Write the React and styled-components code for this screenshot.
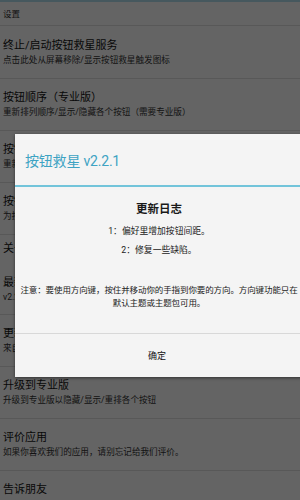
import React from "react";
import styled, { createGlobalStyle } from "styled-components";

const GlobalStyle = createGlobalStyle`
    html, body {
        margin: 0;
        padding: 0;
        background: #646464;
        overflow: hidden;
    }
    * {
        box-sizing: border-box;
    }
`;

const Screen = styled.div`
    position: relative;
    width: 300px;
    height: 500px;
    background: #646464;
    font-family: Roboto, "Noto Sans CJK SC", sans-serif;
    color: #101010;
    overflow: hidden;
    border-top: 2px solid #46585e;
`;

const SectionHeader = styled.div`
    height: ${p => p.$h}px;
    padding: ${p => p.$pt}px 3px 0;
    font-size: 8.5px;
    line-height: 12px;
    color: #111;
    border-bottom: ${p => (p.$line ? "1px solid #585858" : "none")};
`;

const Item = styled.div`
    height: ${p => p.$h || 52}px;
    padding: ${p => (p.$top ? "11px 3px 0" : "0 3px")};
    display: flex;
    flex-direction: column;
    justify-content: ${p => (p.$top ? "flex-start" : "center")};
    border-bottom: 1px solid #585858;
    white-space: nowrap;
    overflow: hidden;
`;

const Title = styled.div`
    font-size: 11px;
    line-height: 15px;
    color: #080808;
`;

const Subtitle = styled.div`
    font-size: 8.6px;
    line-height: 14px;
    color: #121212;
`;

const Dialog = styled.div`
    position: absolute;
    left: 15px;
    top: 132px;
    width: 288px;
    height: 243px;
    background: #f4f4f4;
    display: flex;
    flex-direction: column;
    box-shadow: 0 1px 3px rgba(0, 0, 0, 0.5);
`;

const DialogHead = styled.div`
    height: 53px;
    padding: 0 10px;
    display: flex;
    align-items: center;
    border-bottom: 2px solid #72c4da;
    color: #3da3c3;
    font-size: 14px;
    letter-spacing: -0.2px;
`;

const DialogBody = styled.div`
    flex: 1;
    display: flex;
    flex-direction: column;
    align-items: center;
    padding-top: 12px;
    border-bottom: 1px solid #d8d8d8;
`;

const LogTitle = styled.div`
    font-size: 11.5px;
    font-weight: bold;
    line-height: 20px;
    color: #1a1a1a;
    margin-bottom: 3px;
`;

const LogLine = styled.div`
    font-size: 8.8px;
    line-height: 19px;
    color: #222;
`;

const Note = styled.div`
    margin-top: 24px;
    width: 100%;
    text-align: center;
    font-size: 8.5px;
    line-height: 13px;
    color: #222;
    letter-spacing: -0.1px;
    white-space: nowrap;
`;

const DialogFoot = styled.div`
    height: 43px;
    display: flex;
    align-items: center;
    justify-content: center;
    font-size: 9px;
    color: #111;
    padding-right: 4px;
`;

export default function App() {
    return (
        <>
            <GlobalStyle />
            <Screen>
                <SectionHeader $h={24} $pt={6} $line>设置</SectionHeader>
                <Item $h={53}>
                    <Title>终止/启动按钮救星服务</Title>
                    <Subtitle>点击此处从屏幕移除/显示按钮救星触发图标</Subtitle>
                </Item>
                <Item>
                    <Title>按钮顺序（专业版）</Title>
                    <Subtitle>重新排列顺序/显示/隐藏各个按钮（需要专业版）</Subtitle>
                </Item>
                <Item>
                    <Title>按钮布局</Title>
                    <Subtitle>重新设置按钮的大小和位置</Subtitle>
                </Item>
                <Item>
                    <Title>按钮透明度</Title>
                    <Subtitle>为按钮设置透明度</Subtitle>
                </Item>
                <SectionHeader $h={30} $pt={6}>
                    <Title>关于</Title>
                </SectionHeader>
                <Item $h={50}>
                    <Title>最新版本</Title>
                    <Subtitle>v2.2.1</Subtitle>
                </Item>
                <Item>
                    <Title>更新日志</Title>
                    <Subtitle>来自开发者的更新信息</Subtitle>
                </Item>
                <Item>
                    <Title>升级到专业版</Title>
                    <Subtitle>升级到专业版以隐藏/显示/重排各个按钮</Subtitle>
                </Item>
                <Item>
                    <Title>评价应用</Title>
                    <Subtitle>如果你喜欢我们的应用，请别忘记给我们评价。</Subtitle>
                </Item>
                <Item $top>
                    <Title>告诉朋友</Title>
                </Item>

                <Dialog>
                    <DialogHead>按钮救星 v2.2.1</DialogHead>
                    <DialogBody>
                        <LogTitle>更新日志</LogTitle>
                        <LogLine>1：偏好里增加按钮间距。</LogLine>
                        <LogLine>2：修复一些缺陷。</LogLine>
                        <Note>
                            注意：要使用方向键，按住并移动你的手指到你要的方向。方向键功能只在
                            <br />
                            默认主题或主题包可用。
                        </Note>
                    </DialogBody>
                    <DialogFoot>确定</DialogFoot>
                </Dialog>
            </Screen>
        </>
    );
}
